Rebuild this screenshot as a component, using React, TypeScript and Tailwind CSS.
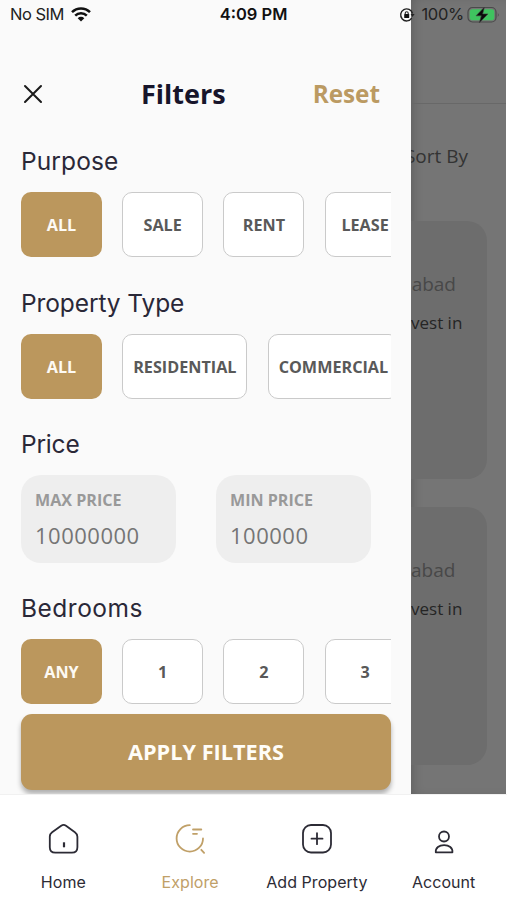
import type { ReactNode } from "react";

const purposes = ["ALL", "SALE", "RENT", "LEASE"];
const propertyTypes = ["ALL", "RESIDENTIAL", "COMMERCIAL"];
const bedrooms = ["ANY", "1", "2", "3"];

const prices = [
  { label: "MAX PRICE", value: "10000000" },
  { label: "MIN PRICE", value: "100000" },
];

const tabs = [
  { label: "Home", icon: <HomeIcon />, active: false },
  { label: "Explore", icon: <ExploreIcon />, active: true },
  { label: "Add Property", icon: <AddIcon />, active: false },
  { label: "Account", icon: <AccountIcon />, active: false },
];

function HomeIcon() {
  return (
    <svg width="32" height="32" viewBox="0 0 32 32" fill="none" stroke="currentColor" strokeWidth="1.8" strokeLinecap="round" strokeLinejoin="round">
      <path d="M14.200 2.700 5.100 9.200C3.500 10.400 2.800 11.600 2.800 13.500v10.800c0 3.300 2.200 5.400 5.500 5.400h16.600c3.300 0 5.500-2.100 5.500-5.400V13.700c0-2-.8-3.300-2.500-4.500L19 2.700c-1.500-1-3.300-1-4.800 0Z" />
      <path d="M17 19.300v5" strokeWidth="2.2" strokeLinecap="butt" />
    </svg>
  );
}

function ExploreIcon() {
  return (
    <svg width="32" height="32" viewBox="0 0 32 32" fill="none" stroke="currentColor" strokeWidth="1.8" strokeLinecap="round">
      <path d="M15.800 2.200a13.200 13.200 0 1 0 13.200 13.200" />
      <path d="M19 6.500h8.300M19 10.800h4M27.300 26.800l2.800 3" />
    </svg>
  );
}

function AddIcon() {
  return (
    <svg width="32" height="32" viewBox="0 0 32 32" fill="none" stroke="currentColor" strokeWidth="1.8" strokeLinecap="round">
      <rect x="2" y="2" width="28" height="27.5" rx="8" />
      <path d="M10.500 15.700h11M16 10.200v11" />
    </svg>
  );
}

function AccountIcon() {
  return (
    <svg width="32" height="32" viewBox="0 0 32 32" fill="none" stroke="currentColor" strokeWidth="1.8" strokeLinejoin="round">
      <circle cx="16" cy="13.5" r="5" />
      <path d="M7.800 29.400c-.5-4.500 3.400-7.300 8.300-7.300s8.800 2.800 8.300 7.300Z" />
    </svg>
  );
}

function StatusBar() {
  return (
    <div className="absolute inset-x-0 top-0 z-10 flex h-[29px] items-center font-['Inter',sans-serif] text-[16.5px] text-[#222]">
      <div className="flex w-[200px] items-center gap-[7px] pl-[10px]">
        <span className="tracking-[-0.5px]">No SIM</span>
        <svg width="20" height="15" viewBox="0 0 20 15" fill="none" stroke="#111" strokeWidth="2.5">
          <path d="M1 5.200a12.700 12.700 0 0 1 18 0M4.200 8.600a8.200 8.200 0 0 1 11.600 0" />
          <path d="M10 14.500 6.700 11.200a4.700 4.700 0 0 1 6.600 0Z" fill="#111" stroke="none" />
        </svg>
      </div>
      <span className="w-[107px] text-center font-semibold whitespace-nowrap text-[#111]">4:09 PM</span>
      <div className="ml-auto flex items-center pr-[7px]">
        <svg width="16" height="16" viewBox="0 0 16 16" fill="none" stroke="#222" strokeWidth="1.4">
          <path d="M12.700 11.200a6 6 0 1 1 .8-4.700" />
          <path d="m11.600 7 4 .1-2.200 3Z" fill="#222" stroke="none" />
          <rect x="5.2" y="7" width="5" height="4" rx=".6" fill="#111" stroke="none" />
          <path d="M6.200 7.300V6.200a1.500 1.500 0 0 1 3 0v1.100" strokeWidth="1.1" />
        </svg>
        <span className="ml-[6px] tracking-[-0.3px]">100%</span>
        <svg className="ml-[3px]" width="33" height="18" viewBox="0 0 33 18">
          <rect x="1" y="1.5" width="28" height="14.5" rx="4.5" fill="none" stroke="#4a4a4a" strokeWidth="1.2" />
          <rect x="2.8" y="3.2" width="24.5" height="11" rx="2.8" fill="#3fc35f" />
          <path d="M30.800 6.500q1.800 2.200 0 4.500Z" fill="#4a4a4a" />
          <path d="M17.500 1 9 9.800h5.300L12.200 17 21 7.900h-5.300Z" fill="#0a0a0a" stroke="#444" strokeWidth=".6" />
        </svg>
      </div>
    </div>
  );
}

function Section({ title, tracking, children }: { title: string; tracking: string; children: ReactNode }) {
  return (
    <section>
      <h2 className={`mb-[13px] pt-px font-['Inter',sans-serif] text-[24.5px] leading-9 font-normal text-[#2a2838] ${tracking}`}>
        {title}
      </h2>
      {children}
    </section>
  );
}

function Chips({ items }: { items: string[] }) {
  return (
    <div className="mr-[20px] flex gap-[20.2px] overflow-hidden">
      {items.map((item, i) => (
        <button
          key={item}
          className={
            i === 0
              ? "h-[65px] w-[81px] shrink-0 rounded-[10px] bg-[#bb975d] pt-[2px] text-[16.2px] font-bold text-[#fdfaf4]"
              : "h-[65px] min-w-[81px] shrink-0 rounded-[10px] border-[1.5px] border-[#cacaca] bg-white px-[10px] pt-[2px] text-[16.2px] font-bold text-[#595959]"
          }
        >
          {item}
        </button>
      ))}
    </div>
  );
}

function Drawer() {
  return (
    <aside className="flex w-[411px] shrink-0 flex-col bg-[#fafafa] pt-[72px] pl-[21px]">
      <header className="flex h-[44px] items-center justify-between pr-[31px]">
        <svg className="ml-[2px]" width="20" height="20" viewBox="0 0 20 20" stroke="#1a1a1a" strokeWidth="2" strokeLinecap="round">
          <path d="m2 2 16 16M18 2 2 18" />
        </svg>
        <h1 className="ml-[11px] text-[27px] font-bold text-[#17152b]">Filters</h1>
        <button className="text-[24.3px] font-bold text-[#bb9a62]">Reset</button>
      </header>

      <div className="mt-[26px] flex flex-col gap-[26.5px]">
        <Section title="Purpose" tracking="tracking-[0.1px]">
          <Chips items={purposes} />
        </Section>
        <Section title="Property Type" tracking="tracking-[-0.1px]">
          <Chips items={propertyTypes} />
        </Section>
        <Section title="Price" tracking="tracking-[-0.2px]">
          <div className="flex gap-[40.5px]">
            {prices.map((p) => (
              <div key={p.label} className="h-[87.5px] w-[154.5px] rounded-[20px] bg-[#eee] px-[14px] pt-[13px]">
                <p className="text-[16.1px] leading-6 font-bold text-[#999]">{p.label}</p>
                <p className="mt-[8px] text-[22px] leading-[30px] tracking-[0.5px] text-[#757575]">{p.value}</p>
              </div>
            ))}
          </div>
        </Section>
        <Section title="Bedrooms" tracking="tracking-[0.5px]">
          <Chips items={bedrooms} />
        </Section>
      </div>

      <button className="mt-[9.5px] mr-[20px] h-[76px] rounded-[11px] bg-[#bb975d] pt-px text-[21.7px] font-bold text-[#fffdf8] shadow-[0_4px_5px_rgba(0,0,0,0.3)]">
        APPLY FILTERS
      </button>
    </aside>
  );
}

function ListingCard({ inset }: { inset: string }) {
  return (
    <div className="mr-[19px] h-[258px] rounded-r-[20px] bg-[#6d6d6d] pt-[48px] pr-[25px] text-right">
      <p className={`text-[19px] leading-[30px] text-[#484848] ${inset}`}>abad</p>
      <p className="mt-[9px] text-[17px] leading-[30px] whitespace-nowrap text-[#252525]">vest in</p>
    </div>
  );
}

function Listings() {
  return (
    <main className="mr-px flex-1 overflow-hidden bg-[#757575] shadow-[inset_6px_0_12px_-5px_rgba(0,0,0,0.2)]">
      <div className="h-[104px] border-b border-[#686868]" />
      <div className="flex h-[117px] justify-end pt-[37px] pr-[38px]">
        <span className="text-[19px] leading-[30px] whitespace-nowrap text-[#333]">Sort By</span>
      </div>
      <div className="flex flex-col gap-[28px]">
        <ListingCard inset="pr-[6px]" />
        <ListingCard inset="pr-[8px]" />
      </div>
    </main>
  );
}

export default function App() {
  return (
    <div className="relative flex h-[900px] w-[507px] flex-col overflow-hidden bg-white font-['Open_Sans',sans-serif]">
      <StatusBar />
      <div className="flex h-[794px] shrink-0 overflow-hidden">
        <Drawer />
        <Listings />
      </div>
      <nav className="grid flex-1 grid-cols-4 border-t border-[#f1f1f1] bg-white font-['Inter',sans-serif]">
        {tabs.map((t) => (
          <a
            key={t.label}
            className={
              t.active
                ? "flex flex-col items-center pt-[28px] text-[#c0a068]"
                : "flex flex-col items-center pt-[28px] text-[#2c2b35]"
            }
          >
            {t.icon}
            <span className="mt-[15px] text-[16px] leading-6 tracking-[0.05px] whitespace-nowrap">{t.label}</span>
          </a>
        ))}
      </nav>
    </div>
  );
}
